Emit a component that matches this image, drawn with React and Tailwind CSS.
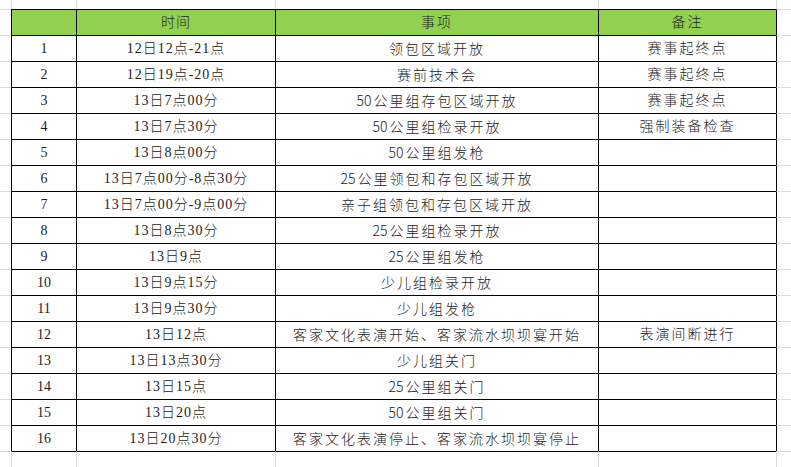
import React from 'react';

const rows = [
  ['1', '12日12点-21点', '领包区域开放', '赛事起终点'],
  ['2', '12日19点-20点', '赛前技术会', '赛事起终点'],
  ['3', '13日7点00分', '50公里组存包区域开放', '赛事起终点'],
  ['4', '13日7点30分', '50公里组检录开放', '强制装备检查'],
  ['5', '13日8点00分', '50公里组发枪', ''],
  ['6', '13日7点00分-8点30分', '25公里领包和存包区域开放', ''],
  ['7', '13日7点00分-9点00分', '亲子组领包和存包区域开放', ''],
  ['8', '13日8点30分', '25公里组检录开放', ''],
  ['9', '13日9点', '25公里组发枪', ''],
  ['10', '13日9点15分', '少儿组检录开放', ''],
  ['11', '13日9点30分', '少儿组发枪', ''],
  ['12', '13日12点', '客家文化表演开始、客家流水坝坝宴开始', '表演间断进行'],
  ['13', '13日13点30分', '少儿组关门', ''],
  ['14', '13日15点', '25公里组关门', ''],
  ['15', '13日20点', '50公里组关门', ''],
  ['16', '13日20点30分', '客家文化表演停止、客家流水坝坝宴停止', ''],
];

const widths = ['w-[65px]', 'w-[199px]', 'w-[323px]', 'w-[178px]'];
const tracking = ['tracking-[0px]', 'tracking-[1px]', 'tracking-[2px]', 'tracking-[2px]'];

// event column: sans digits packed tight, CJK spaced out
function EventText({ text }) {
  const parts = text.split(/(\d+)/).filter(Boolean);
  return (
    <span style={{ fontFamily: '"Noto Sans CJK SC", sans-serif' }}>
      {parts.map((p, i) =>
        /^\d+$/.test(p) ? (
          <span key={i} className="tracking-[0px] pr-[2px]">{p}</span>
        ) : (
          <span key={i}>{p}</span>
        )
      )}
    </span>
  );
}

// empty spreadsheet row (above / below the table)
function FillerRow({ height, top }) {
  return (
    <div className={`flex ${height}`}>
      <div className={`w-[11px] shrink-0 ${top ? 'border-t border-[#dadada]' : ''}`}></div>
      {widths.map((w, i) => (
        <div
          key={i}
          className={`${w} shrink-0 border-l border-[#dadada] ${top ? 'border-t border-t-black' : ''}`}
        ></div>
      ))}
      <div className={`flex-1 border-l border-[#dadada] ${top ? 'border-t' : ''}`}></div>
    </div>
  );
}

function Row({ cells, header }) {
  return (
    <div className="flex h-[26px]">
      <div className="w-[11px] shrink-0 border-t border-[#dadada]"></div>
      {cells.map((c, i) => (
        <div
          key={i}
          className={`${widths[i]} shrink-0 border-t border-l border-black flex items-center justify-center whitespace-nowrap ${tracking[i]} ${header ? 'bg-[#92d050]' : 'bg-white'}`}
        >
          {i === 2 && !header ? <EventText text={c} /> : c}
        </div>
      ))}
      <div className="flex-1 border-t border-t-[#dadada] border-l border-l-black"></div>
    </div>
  );
}

export default function App() {
  return (
    <div
      className="w-[791px] h-[467px] overflow-hidden bg-white text-[14px] font-light text-[#1c1c1c]"
      style={{ fontFamily: '"Liberation Serif", "Noto Sans CJK SC", serif' }}
    >
      <FillerRow height="h-[9px]" />
      <Row cells={['', '时间', '事项', '备注']} header />
      {rows.map((r) => (
        <Row key={r[0]} cells={r} />
      ))}
      <FillerRow height="h-[16px]" top />
    </div>
  );
}
